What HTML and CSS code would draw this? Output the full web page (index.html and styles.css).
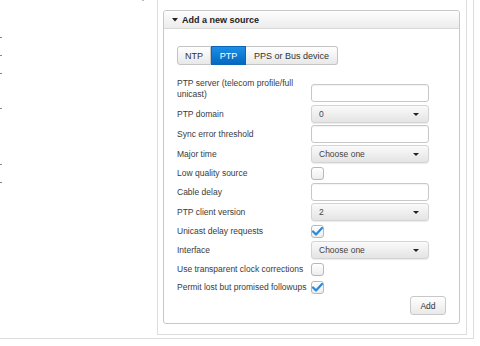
FILE: index.html
```html
<!DOCTYPE html>
<html>
<head>
<meta charset="utf-8">
<link rel="stylesheet" href="styles.css">
</head>
<body>
<div class="outer">
  <div class="sidebar">
    <span class="smudge"></span>
    <span class="dot d1"></span>
    <span class="dot d2"></span>
    <span class="dot d2"></span>
    <span class="dot d3"></span>
    <span class="dot d4"></span>
    <span class="dot d2"></span>
  </div>
  <div class="inner">
    <div class="panel">
      <div class="panel-head">
        <svg class="caret" width="6" height="4" viewBox="0 0 6 4"><path d="M0 0h6L3 3.5z" fill="#222"/></svg>
        <span>Add a new source</span>
      </div>
      <div class="panel-body">
        <div class="tabs">
          <span class="tab tab-first">NTP</span>
          <span class="tab tab-active">PTP</span>
          <span class="tab tab-last">PPS or Bus device</span>
        </div>
        <div class="form">
          <div class="row row-tall">
            <label class="lbl lbl-top">PTP server (telecom profile/full unicast)</label>
            <span class="input input-low"></span>
          </div>
          <div class="row">
            <label class="lbl">PTP domain</label>
            <span class="select"><span>0</span><i class="arrow"></i></span>
          </div>
          <div class="row">
            <label class="lbl">Sync error threshold</label>
            <span class="input"></span>
          </div>
          <div class="row">
            <label class="lbl">Major time</label>
            <span class="select"><span>Choose one</span><i class="arrow"></i></span>
          </div>
          <div class="row row-check">
            <label class="lbl">Low quality source</label>
            <span class="check"></span>
          </div>
          <div class="row">
            <label class="lbl">Cable delay</label>
            <span class="input"></span>
          </div>
          <div class="row">
            <label class="lbl">PTP client version</label>
            <span class="select"><span>2</span><i class="arrow"></i></span>
          </div>
          <div class="row row-check">
            <label class="lbl">Unicast delay requests</label>
            <span class="check"><svg width="11" height="9" viewBox="0 0 11 9"><path d="M1 4.5l3 3L10 1" fill="none" stroke="#2b8ad6" stroke-width="2.2" stroke-linecap="round" stroke-linejoin="round"/></svg></span>
          </div>
          <div class="row">
            <label class="lbl">Interface</label>
            <span class="select"><span>Choose one</span><i class="arrow"></i></span>
          </div>
          <div class="row row-check">
            <label class="lbl">Use transparent clock corrections</label>
            <span class="check"></span>
          </div>
          <div class="row row-check">
            <label class="lbl">Permit lost but promised followups</label>
            <span class="check"><svg width="11" height="9" viewBox="0 0 11 9"><path d="M1 4.5l3 3L10 1" fill="none" stroke="#2b8ad6" stroke-width="2.2" stroke-linecap="round" stroke-linejoin="round"/></svg></span>
          </div>
          <div class="actions">
            <span class="btn">Add</span>
          </div>
        </div>
      </div>
    </div>
  </div>
</div>
</body>
</html>
```

FILE: styles.css
```css
html, body {
  margin: 0;
  padding: 0;
  background: #fff;
  width: 480px;
  height: 346px;
  overflow: hidden;
}
body {
  font-family: "Liberation Sans", Arial, sans-serif;
  font-size: 9px;
  color: #333;
}
.outer {
  display: flex;
  align-items: flex-start;
  width: 467px;
  height: 338px;
  padding-right: 6px;
  border-right: 1px solid #ddd;
  border-bottom: 1px solid #ddd;
}
.sidebar {
  width: 157px;
  flex: none;
  display: flex;
  flex-direction: column;
  align-items: flex-start;
}
.smudge {
  display: block;
  width: 2px;
  height: 1px;
  margin-left: 142px;
  background: #bbb;
}
.dot {
  display: block;
  width: 2px;
  height: 1px;
  background: #888;
}
.d1 { margin-top: 36px; }
.d2 { margin-top: 17px; }
.d3 { margin-top: 34px; }
.d4 { margin-top: 55px; }
.inner {
  width: 297px;
  height: 314px;
  flex: none;
  padding: 10px 6px 10px 5px;
  border-left: 1px solid #ddd;
  border-right: 1px solid #ddd;
  border-bottom: 1px solid #ddd;
}
.panel {
  height: 312px;
  border: 1px solid #c8c8c8;
  border-radius: 3px;
}
.panel-head {
  height: 17px;
  display: flex;
  align-items: center;
  gap: 4px;
  padding-left: 8px;
  font-weight: bold;
  color: #222;
  background: linear-gradient(#fdfdfd, #ececec);
  border-bottom: 1px solid #d8d8d8;
  border-radius: 3px 3px 0 0;
}
.panel-body {
  padding: 17px 0 0 13px;
}
.tabs {
  display: flex;
  height: 19px;
}
.tab {
  display: flex;
  align-items: center;
  justify-content: center;
  height: 17px;
  border: 1px solid #c4c4c4;
  background: linear-gradient(#ffffff, #e8e8e8);
  color: #333;
}
.tab-first {
  width: 32px;
  border-radius: 3px 0 0 3px;
}
.tab-active {
  width: 33px;
  color: #fff;
  border-color: #0a67b8;
  background: linear-gradient(#1d8fe4, #0468c2);
}
.tab-last {
  width: 91px;
  border-left: none;
  border-radius: 0 3px 3px 0;
}
.form {
  margin-top: 12px;
  width: 252px;
  font-size: 8.5px;
  color: #3a3a3a;
}
.row {
  display: flex;
  align-items: center;
  height: 20px;
}
.row-tall {
  height: 27px;
  align-items: flex-start;
}
.row-check {
  height: 18px;
}
.lbl {
  width: 134px;
  flex: none;
  line-height: 11px;
}
.lbl-top {
  width: 122px;
  margin-right: 12px;
  padding-top: 1px;
}
.input {
  display: block;
  width: 116px;
  height: 16px;
  border: 1px solid #c8c8c8;
  border-radius: 3px;
  background: #fff;
  box-shadow: inset 0 1px 1px rgba(0,0,0,0.05);
}
.input-low {
  margin-top: 7px;
}
.select {
  display: flex;
  align-items: center;
  justify-content: space-between;
  box-sizing: border-box;
  width: 118px;
  height: 18px;
  padding: 0 9px 0 7px;
  border: 1px solid #d4d4d4;
  border-radius: 3px;
  background: linear-gradient(#fafafa, #e4e4e4);
  color: #444;
  box-shadow: 0 1px 1px rgba(0,0,0,0.08);
}
.arrow {
  width: 0;
  height: 0;
  border-left: 3px solid transparent;
  border-right: 3px solid transparent;
  border-top: 3px solid #222;
}
.check {
  display: flex;
  align-items: center;
  justify-content: center;
  box-sizing: border-box;
  width: 13px;
  height: 13px;
  border: 1px solid #b8b8b8;
  border-radius: 3px;
  background: linear-gradient(#fff, #ededed);
}
.actions {
  display: flex;
  justify-content: flex-end;
  width: 269px;
}
.btn {
  display: flex;
  align-items: center;
  justify-content: center;
  box-sizing: border-box;
  width: 36px;
  height: 19px;
  border: 1px solid #c8c8c8;
  border-radius: 3px;
  background: linear-gradient(#fff, #e9e9e9);
  color: #333;
}
```
